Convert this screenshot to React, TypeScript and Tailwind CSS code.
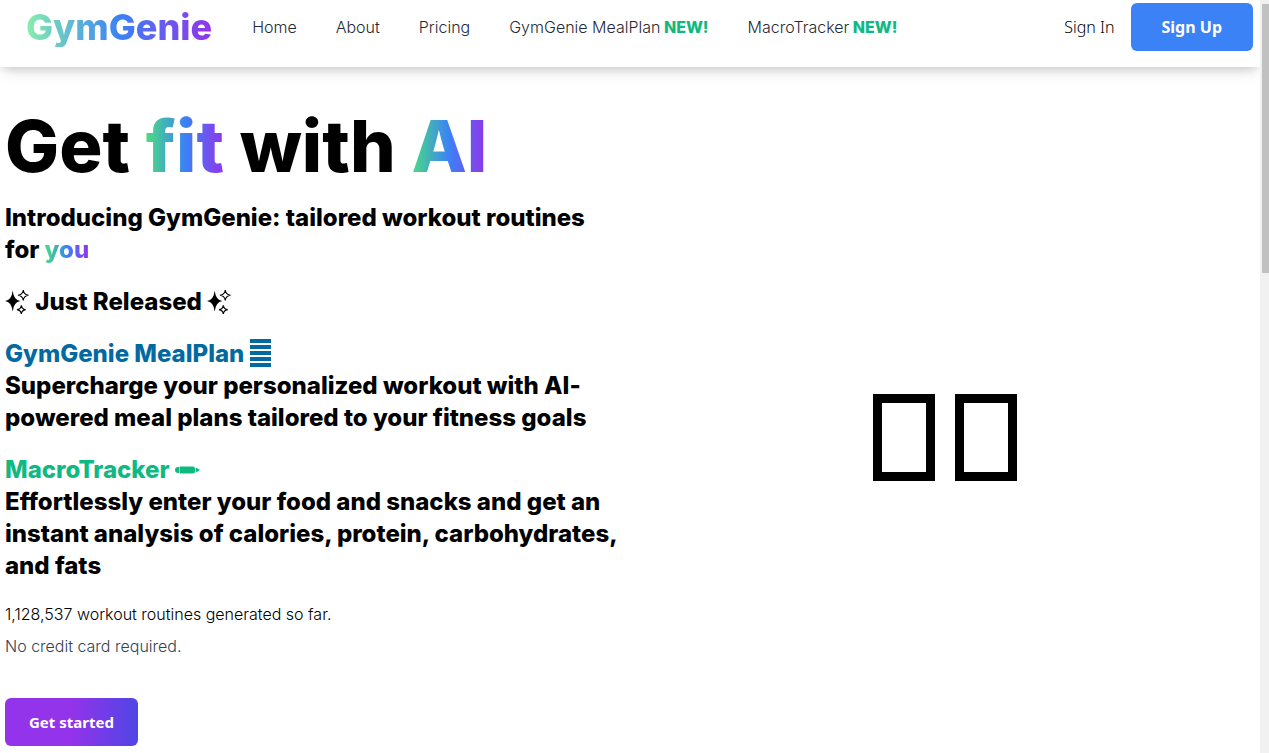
import React from "react";

const links = [
  { label: "Home" },
  { label: "About" },
  { label: "Pricing" },
  { label: "GymGenie MealPlan", isNew: true },
  { label: "MacroTracker", isNew: true },
];

function Accent({ children }: { children: React.ReactNode }) {
  return (
    <span className="bg-linear-to-r/srgb from-[#4ade80] via-[#3b82f6] to-[#9333ea] bg-clip-text text-transparent">
      {children}
    </span>
  );
}

function Sparkles() {
  return (
    <svg viewBox="0 0 26 28" className="inline-block h-7 w-[25px] align-[-6px]" aria-hidden="true">
      <path
        fill="currentColor"
        d="M8 2Q9 12 16 13Q9 14 8 24Q7 14 0 13Q7 12 8 2Z"
      />
      <path
        fill="none"
        stroke="currentColor"
        strokeWidth="1.2"
        d="M19 1.5Q19.5 6.5 24.5 7Q19.5 7.5 19 12.5Q18.5 7.5 13.5 7Q18.5 6.5 19 1.5Z M17 17.5Q17.5 21.5 21.5 22Q17.5 22.5 17 26.5Q16.5 22.5 12.5 22Q16.5 21.5 17 17.5Z"
      />
    </svg>
  );
}

function Bars() {
  return (
    <svg viewBox="0 0 21 29" className="ml-[6px] inline-block h-[29px] w-[21px] align-[-6px]" aria-hidden="true">
      <path fill="currentColor" d="M0 0h21v4H0zM0 6h21v4H0zM0 12h21v4H0zM0 18h21v4H0zM0 24h21v4H0z" />
    </svg>
  );
}

function Pencil() {
  return (
    <svg viewBox="0 0 26 10" className="ml-[5px] inline-block h-[10px] w-[26px] align-[3px]" aria-hidden="true">
      <path
        fill="currentColor"
        d="M3 2H4V8H3Q0 8 0 5Q0 2 3 2ZM4.5 1.5H18Q20.5 2 20.5 5Q20.5 8 18 8.5H4.5ZM21 2.5L25 5L21 7.5Z"
      />
    </svg>
  );
}

export default function App() {
  return (
    <div className="flex min-h-screen bg-white font-['Inter',sans-serif] text-black">
      <div className="flex min-w-0 flex-1 flex-col overflow-hidden">
        <header className="flex items-start justify-between pt-[3px] pr-[7px] pb-4 pl-[26px] shadow-[0_5px_10px_-3px_rgb(0_0_0/0.22),0_15px_20px_-5px_rgb(0_0_0/0.03)]">
          <div className="flex h-12 items-center gap-10">
            <a
              href="#home"
              className="bg-linear-to-r/srgb from-[#86efac] via-[#3b82f6] to-[#9333ea] bg-clip-text text-4xl font-extrabold text-transparent"
            >
              GymGenie
            </a>
            <nav className="flex items-center gap-[39px] font-light text-[#1f2937]">
              {links.map((link) => (
                <a key={link.label} href={"#" + link.label.replace(" ", "-").toLowerCase()}>
                  {link.label}
                  {link.isNew && <span className="font-extrabold text-[#10b981]"> NEW!</span>}
                </a>
              ))}
            </nav>
          </div>
          <div className="flex h-12 items-center gap-4 font-['Noto_Sans',sans-serif]">
            <button type="button" className="text-base font-light">Sign In</button>
            <button type="button" className="h-12 rounded-md bg-[#3b82f6] px-[31px] text-base font-bold text-white">
              Sign Up
            </button>
          </div>
        </header>

        <main className="grid grid-cols-2 pr-[2px] pl-[5px]">
          <section className="pt-10 pr-2 text-2xl font-extrabold">
            <h1 className="text-7xl leading-[78px]">
              Get <Accent>fit</Accent> with <Accent>AI</Accent>
            </h1>
            <p className="mt-[17px]">
              Introducing GymGenie: tailored workout routines for <Accent>you</Accent>
            </p>
            <p className="mt-5">
              <Sparkles /> Just Released <Sparkles />
            </p>
            <div className="mt-5">
              <a href="#mealplan" className="text-[#0369a1]">
                GymGenie MealPlan
                <Bars />
              </a>
              <p>Supercharge your personalized workout with AI-powered meal plans tailored to your fitness goals</p>
            </div>
            <div className="mt-5">
              <a href="#macrotracker" className="text-[#10b981]">
                MacroTracker
                <Pencil />
              </a>
              <p>
                Effortlessly enter your food and snacks and get an instant analysis of calories, protein, carbohydrates,
                and fats
              </p>
            </div>
            <div className="mt-4 text-base leading-8 font-light">
              <p>1,128,537 workout routines generated so far.</p>
              <p className="text-[#334155]">No credit card required.</p>
            </div>
            <button
              type="button"
              className="mt-9 mb-[7px] block h-12 rounded-md bg-linear-to-r/srgb from-[#9333ea] from-50% to-[#4f46e5] px-6 font-['Noto_Sans',sans-serif] text-[15px] font-bold text-white"
            >
              Get started
            </button>
          </section>
          <section className="flex items-center justify-center gap-5 pt-[54px]" aria-label="Workout">
            <span className="h-[87px] w-[62px] border-9 border-black" />
            <span className="h-[87px] w-[62px] border-9 border-black" />
          </section>
        </main>
      </div>
      <div className="w-[9px] shrink-0 bg-[#f1f1f1] pt-1 pl-[2px]" aria-hidden="true">
        <div className="h-[269px] bg-[#c1c1c1]" />
      </div>
    </div>
  );
}
